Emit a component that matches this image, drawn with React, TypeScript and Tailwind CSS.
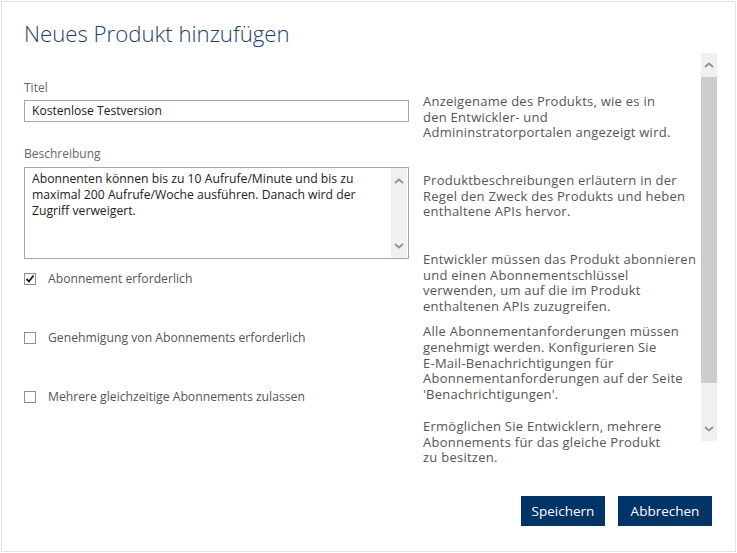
import { useState } from "react";

const FONT = "font-['Open_Sans',_'Liberation_Sans',_sans-serif]";

const Chevron = ({ up }: { up?: boolean }) => (
  <svg width="10" height="6" viewBox="0 0 10 6" className="block">
    <path
      d={up ? "M1 5 L5 1.5 L9 5" : "M1 1 L5 4.5 L9 1"}
      fill="none"
      stroke="#8a92a3"
      strokeWidth="1.8"
    />
  </svg>
);

const Checkbox = ({
  checked,
  label,
  onToggle,
}: {
  checked: boolean;
  label: string;
  onToggle: () => void;
}) => (
  <label className="flex items-center h-[20px] cursor-pointer" onClick={onToggle}>
    <span className="w-[12px] h-[12px] border border-[#8f8f8f] bg-white flex items-center justify-center">
      {checked && (
        <svg width="10" height="10" viewBox="0 0 10 10">
          <path d="M1.5 5 L4 7.5 L8.5 1.5" fill="none" stroke="#1a1a1a" strokeWidth="1.8" />
        </svg>
      )}
    </span>
    <span className="ml-[12px] text-[12.2px] text-[#555]">{label}</span>
  </label>
);

export default function App() {
  const [abo, setAbo] = useState(true);
  const [approval, setApproval] = useState(false);
  const [multi, setMulti] = useState(false);

  return (
    <div className={`p-px bg-white ${FONT}`}>
      <div className="w-[735px] h-[551px] border border-[#e3e3e3] bg-white flex flex-col">
        <h1 className="pl-[22px] pt-[18px] text-[22.2px] leading-[28px] font-light text-[#1d3f6e]">
          Neues Produkt hinzufügen
        </h1>

        <div className="mt-[5px] flex h-[388px]">
          {/* linke Spalte: Formular */}
          <div className="ml-[22px] w-[385px] flex flex-col">
            <div className="mt-[27px] text-[12px] leading-[16px] text-[#666]">Titel</div>
            <div className="mt-[4px] h-[22px] border border-[#a6a6a6] px-[7px] flex items-center text-[12.1px] text-[#222]">
              Kostenlose Testversion
            </div>

            <div className="mt-[24px] text-[12px] leading-[16px] text-[#666]">Beschreibung</div>
            <div className="mt-[5px] h-[92px] border border-[#a6a6a6] flex">
              <div className="flex-1 px-[7px] pt-[3px] text-[12.2px] leading-[16px] text-[#222]">
                Abonnenten können bis zu 10 Aufrufe/Minute und bis zu
                <br />
                maximal 200 Aufrufe/Woche ausführen. Danach wird der
                <br />
                Zugriff verweigert.
              </div>
              <div className="w-[16px] mr-px bg-[#f0f0f0] flex flex-col items-center justify-between pt-[10px] pb-[9px]">
                <Chevron up />
                <Chevron />
              </div>
            </div>

            <div className="mt-[10px]">
              <Checkbox checked={abo} label="Abonnement erforderlich" onToggle={() => setAbo(!abo)} />
            </div>
            <div className="mt-[39px]">
              <Checkbox
                checked={approval}
                label="Genehmigung von Abonnements erforderlich"
                onToggle={() => setApproval(!approval)}
              />
            </div>
            <div className="mt-[39px]">
              <Checkbox
                checked={multi}
                label="Mehrere gleichzeitige Abonnements zulassen"
                onToggle={() => setMulti(!multi)}
              />
            </div>
          </div>

          {/* rechte Spalte: Hilfetexte */}
          <div className="ml-[14px] w-[278px] text-[13px] tracking-[0.25px] leading-[15.6px] text-[#555] whitespace-nowrap">
            <p className="mt-[41px]">
              Anzeigename des Produkts, wie es in
              <br />
              den Entwickler- und
              <br />
              Admininstratorportalen angezeigt wird.
            </p>
            <p className="mt-[32.5px]">
              Produktbeschreibungen erläutern in der
              <br />
              Regel den Zweck des Produkts und heben
              <br />
              enthaltene APIs hervor.
            </p>
            <p className="mt-[32px]">
              Entwickler müssen das Produkt abonnieren
              <br />
              und einen Abonnementschlüssel
              <br />
              verwenden, um auf die im Produkt
              <br />
              enthaltenen APIs zuzugreifen.
            </p>
            <p className="mt-[10px]">
              Alle Abonnementanforderungen müssen
              <br />
              genehmigt werden. Konfigurieren Sie
              <br />
              E-Mail-Benachrichtigungen für
              <br />
              Abonnementanforderungen auf der Seite
              <br />
              'Benachrichtigungen'.
            </p>
            <p className="mt-[16.5px]">
              Ermöglichen Sie Entwicklern, mehrere
              <br />
              Abonnements für das gleiche Produkt
              <br />
              zu besitzen.
            </p>
          </div>

          {/* Bildlaufleiste */}
          <div className="w-[16px] h-[388px] bg-[#f0f0f0] flex flex-col items-center">
            <div className="h-[24px] flex items-center">
              <Chevron up />
            </div>
            <div className="w-full h-[306px] bg-[#cdcdcd]" />
            <div className="flex-1 flex items-end pb-[9px]">
              <Chevron />
            </div>
          </div>
        </div>

        <div className="mt-auto mb-[25px] mr-[23px] flex justify-end gap-[13px]">
          <button className="w-[84px] h-[30px] bg-[#003366] text-white text-[13.5px]">Speichern</button>
          <button className="w-[94px] h-[30px] bg-[#003366] text-white text-[13.5px]">Abbrechen</button>
        </div>
      </div>
    </div>
  );
}
